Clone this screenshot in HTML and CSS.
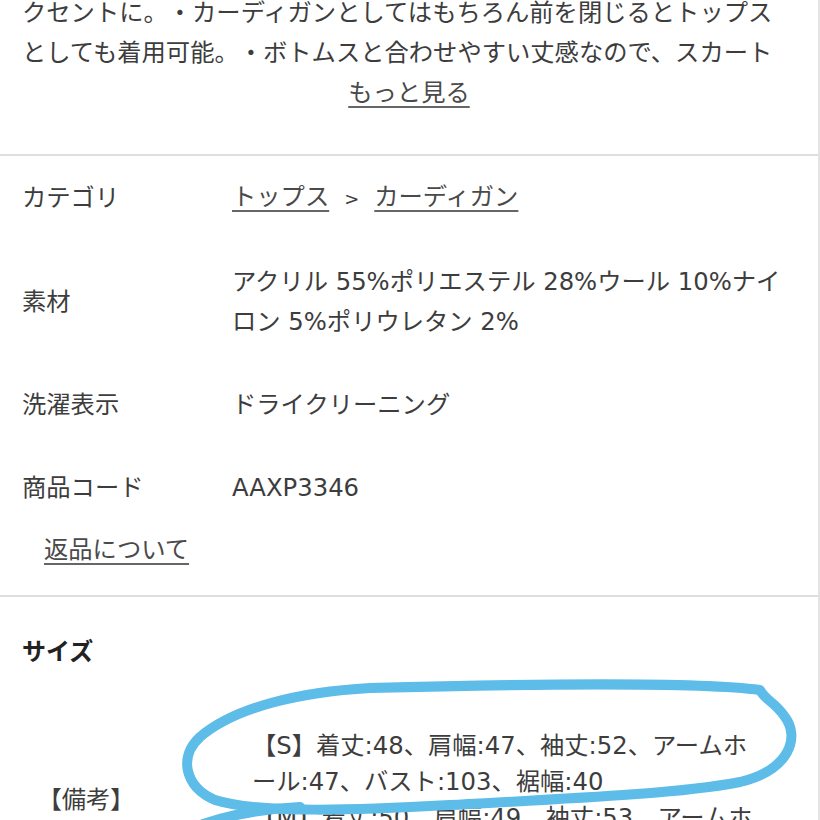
FILE: index.html
```html
<!DOCTYPE html>
<html lang="ja">
<head>
  <meta charset="UTF-8" />
  <meta name="viewport" content="width=device-width, initial-scale=1.0" />
  <title>商品詳細</title>
  <link rel="stylesheet" href="styles.css">
</head>
<body>
  <div class="page">
    <section class="desc">
      <p class="desc-text">・袖口のパール調ボタンがポイントで、上品な雰囲気を演出できるアクセントに。・カーディガンとしてはもちろん前を閉じるとトップスとしても着用可能。・ボトムスと合わせやすい丈感なので、スカートにもパンツにも合わせやすいです。</p>
      <a class="more" href="#">もっと見る</a>
    </section>

    <section class="spec">
      <div class="spec-row">
        <div class="spec-label">カテゴリ</div>
        <div class="spec-value">
          <a href="#">トップス</a><span class="sep">&gt;</span><a href="#">カーディガン</a>
        </div>
      </div>
      <div class="spec-row">
        <div class="spec-label">素材</div>
        <div class="spec-value">アクリル 55%ポリエステル 28%ウール 10%ナイロン 5%ポリウレタン 2%</div>
      </div>
      <div class="spec-row">
        <div class="spec-label">洗濯表示</div>
        <div class="spec-value">ドライクリーニング</div>
      </div>
      <div class="spec-row">
        <div class="spec-label">商品コード</div>
        <div class="spec-value">AAXP3346</div>
      </div>
      <a class="return" href="#">返品について</a>
    </section>

    <section class="size">
      <h2>サイズ</h2>
      <div class="size-table">
        <div class="size-label">【備考】</div>
        <div class="size-value">
          【S】着丈:48、肩幅:47、袖丈:52、アームホール:47、バスト:103、裾幅:40<br>
          【M】着丈:50、肩幅:49、袖丈:53、アームホール:49、バスト:107、裾幅:42
        </div>
      </div>
      <!-- hand-drawn marker circling the S size -->
      <svg class="marker" viewBox="0 0 820 260" width="820" height="260">
        <path d="M370,91 C300,95 235,110 200,140 C178,160 185,190 215,203 C260,217 360,213 450,208 C560,202 680,197 740,185 C790,173 800,140 785,120 C775,105 765,103 760,93 C700,85 520,87 370,91 Z" />
        <path d="M300,210 C260,212 225,218 190,232" />
      </svg>
    </section>
  </div>
</body>
</html>
```

FILE: styles.css
```css
body {
  margin: 0;
  background-color: #fff;
  color: #3d3d3d;
  font-family: "DejaVu Sans", "Noto Sans CJK JP", sans-serif;
  font-size: 24.3px;
  text-spacing-trim: space-all;
  overflow: hidden;
}
a {
  color: #4a4a4a;
  text-decoration: underline;
  text-decoration-color: #666;
  text-decoration-thickness: 2px;
  text-underline-offset: 5px;
}
.page {
  width: 818px;
  margin-top: -47px;
  border-right: 2px solid #e3e3e3;
}
.desc {
  padding: 0 22px 41px;
  border-bottom: 2px solid #dedede;
  text-align: center;
}
.desc-text {
  margin: 0;
  width: 760px;
  max-height: 120px;
  overflow: hidden;
  line-height: 40px;
  text-align: left;
}
.more {
  display: inline-block;
  line-height: 40px;
}
.spec {
  padding: 0 22px 25px;
  border-bottom: 2px solid #dedede;
}
.spec-row {
  display: grid;
  grid-template-columns: 210px 560px;
  align-items: center;
  padding: 21px 0 22px;
  line-height: 40px;
}
.sep {
  margin: 0 15px;
  font-size: 18px;
}
.return {
  display: inline-block;
  margin-left: 22px;
  line-height: 40px;
}
.size {
  position: relative;
  padding: 35px 22px 0;
}
.size h2 {
  margin: 0;
  font-size: 24px;
  line-height: 40px;
  font-weight: 700;
  color: #222;
}
.size-table {
  display: grid;
  grid-template-columns: 128px 510px;
  column-gap: 102px;
  align-items: center;
  margin-top: 56px;
  line-height: 36px;
}
.size-label {
  text-align: center;
}
.size-value {
  line-break: loose;
}
.marker {
  position: absolute;
  top: 0;
  left: 0;
  pointer-events: none;
}
.marker path {
  fill: none;
  stroke: #5dbce8;
  stroke-width: 10;
  stroke-linecap: round;
  stroke-linejoin: round;
}
```
